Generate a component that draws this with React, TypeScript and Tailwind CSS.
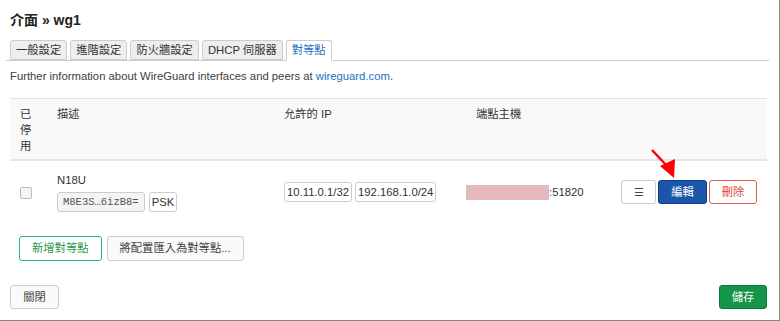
import React from 'react';

const font = "font-['Liberation_Sans','Noto_Sans_CJK_TC',sans-serif]";

const tabs = ['一般設定', '進階設定', '防火牆設定', 'DHCP 伺服器', '對等點'];

const Tab: React.FC<{ label: string; active?: boolean }> = ({ label, active }) => (
  <div
    className={
      active
        ? 'h-[21px] px-[5px] leading-[19px] border border-[#ccc] border-b-white bg-white text-[#1f6fc5] rounded-t-[3px] -mb-px'
        : 'h-[20px] px-[5px] leading-[18px] border border-[#ccc] bg-[#eee] text-[#333] rounded-t-[3px]'
    }
  >
    {label}
  </div>
);

const Badge: React.FC<{ children: React.ReactNode; mono?: boolean }> = ({ children, mono }) => (
  <span
    className={
      mono
        ? "inline-block h-[20px] px-[5px] leading-[18px] border border-[#ccc] rounded-[3px] bg-[#f4f4f4] text-[#555] text-[10.5px] font-['Liberation_Mono',monospace]"
        : 'inline-block h-[20px] px-[2px] leading-[18px] border border-[#ccc] rounded-[3px] bg-white text-[#333]'
    }
  >
    {children}
  </span>
);

export default function App() {
  return (
    <div className={`${font} relative w-[780px] h-[321px] bg-white text-[11.3px] text-[#404040] border-r border-b border-[#888] overflow-hidden`}>
      <div className="pt-[11px] px-[10px]">
        <h2 className="text-[14px] font-bold text-[#222] leading-[18px]">介面 » wg1</h2>
      </div>

      <div className="mt-[11px] ml-[6px] mr-[10px] pl-[4px] flex gap-[3px] border-b border-[#ccc] items-end">
        {tabs.map((t, i) => (
          <Tab key={t} label={t} active={i === tabs.length - 1} />
        ))}
      </div>

      <p className="px-[10px] mt-[7px] leading-[16px]">
        Further information about WireGuard interfaces and peers at{' '}
        <span className="text-[#1f6fc5]">wireguard.com</span>.
      </p>

      <div className="ml-[10px] w-[757px] mt-[14px]">
        <div className="grid grid-cols-[37px_227px_192px_1fr] bg-[#f9f9f9] border-t border-[#e2e2e2] border-b-2 border-b-[#e6e6e6] h-[63px] text-[#333]">
          <div className="pl-[10px] pt-[7px] leading-[16px] w-[24px]">已停用</div>
          <div className="pl-[10px] pt-[7px] leading-[16px]">描述</div>
          <div className="pl-[10px] pt-[7px] leading-[16px]">允許的 IP</div>
          <div className="pl-[10px] pt-[7px] leading-[16px]">端點主機</div>
        </div>

        <div className="grid grid-cols-[37px_227px_192px_1fr] h-[62px] items-center text-[#333]">
          <div className="pl-[10px] pt-[2px]">
            <span className="block w-[12px] h-[12px] border border-[#bbb] rounded-[2px] bg-[#f4f4f4]" />
          </div>
          <div className="pl-[10px] flex flex-col gap-[4px]">
            <div className="leading-[16px]">N18U</div>
            <div className="flex gap-[4px]">
              <Badge mono>M8E3S…6izB8=</Badge>
              <Badge>PSK</Badge>
            </div>
          </div>
          <div className="pl-[10px] flex gap-[3px]">
            <Badge>10.11.0.1/32</Badge>
            <Badge>192.168.1.0/24</Badge>
          </div>
          <div className="flex items-center justify-between pr-[10px]">
            <div className="flex items-center">
              <span className="block w-[83px] h-[15px] bg-[#e6b9c0]" />
              <span>:51820</span>
            </div>
            <div className="flex gap-[2px]">
              <button className="h-[24px] w-[35px] border border-[#ccc] rounded-[3px] bg-white text-[#444]">☰</button>
              <button className="h-[24px] w-[49px] border border-[#0d3f8c] rounded-[3px] bg-[#1b56ab] text-white">編輯</button>
              <button className="h-[24px] w-[48px] border border-[#e2594c] rounded-[3px] bg-white text-[#e2453a]">刪除</button>
            </div>
          </div>
        </div>

        <div className="flex gap-[5px] mt-[13px] ml-[9px]">
          <button className="h-[25px] px-[12px] border border-[#2bb86a] rounded-[3px] bg-white text-[#2a9a4c]">新增對等點</button>
          <button className="h-[25px] px-[12px] border border-[#ccc] rounded-[3px] bg-[#fafafa] text-[#444]">將配置匯入為對等點...</button>
        </div>

        <div className="flex justify-between mt-[24px]">
          <button className="h-[24px] w-[49px] border border-[#ccc] rounded-[3px] bg-[#fafafa] text-[#444]">關閉</button>
          <button className="h-[24px] w-[48px] border border-[#0c7a38] rounded-[3px] bg-[#15944a] text-white">儲存</button>
        </div>
      </div>

      <svg className="absolute left-[648px] top-[146px]" width="32" height="34" viewBox="0 0 32 34">
        <line x1="4" y1="4" x2="19" y2="20" stroke="#f00" strokeWidth="2.5" />
        <polygon points="12,20 27,13 26,32" fill="#f00" />
      </svg>
    </div>
  );
}
